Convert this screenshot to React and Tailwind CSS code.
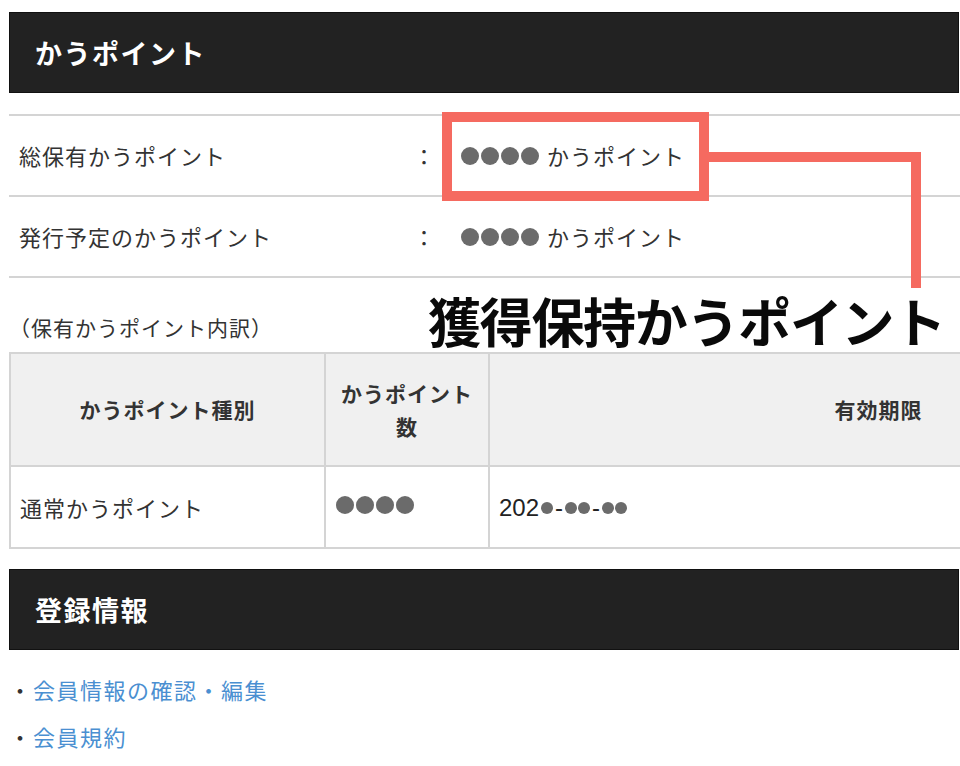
import React from 'react';

const font = { fontFamily: '"Noto Sans CJK JP", "Noto Sans", sans-serif' };

function SectionBar({ title }) {
  return (
    <div className="w-[950px] h-[81px] bg-[#222222] border border-[#111111] flex items-center pl-[25px]">
      <h2 className="text-white text-[27px] font-bold leading-none tracking-[1.5px]">{title}</h2>
    </div>
  );
}

function Dots({ big = true }) {
  const dot = big ? 'w-[18px] h-[18px]' : 'w-[12px] h-[12px]';
  const count = big ? 4 : 2;
  return (
    <span className={`inline-flex items-center ${big ? 'gap-[2px]' : 'gap-[1px]'}`}>
      {Array.from({ length: count }).map((_, i) => (
        <span key={i} className={`${dot} rounded-full bg-[#6b6b6b]`} />
      ))}
    </span>
  );
}

function PointRow({ label }) {
  return (
    <div className="flex items-center h-[81px] border-b-2 border-[#d4d4d4] text-[22px] text-[#333333] tracking-[1px]">
      <div className="w-[404px] pl-[10px]">{label}</div>
      <div className="w-[48px]">：</div>
      <div className="flex items-center gap-[8px]">
        <Dots />
        <span>かうポイント</span>
      </div>
    </div>
  );
}

export default function App() {
  return (
    <div className="relative w-[960px] h-[766px] overflow-hidden bg-white" style={font}>
      <div className="pl-[9px] pt-[12px]">
        <SectionBar title="かうポイント" />

        <div className="w-[951px] mt-[21px] border-t-2 border-[#d4d4d4]">
          <PointRow label="総保有かうポイント" />
          <PointRow label="発行予定のかうポイント" />
        </div>

        <p className="mt-[39px] text-[21px] text-[#333333] leading-none tracking-[1px]">（保有かうポイント内訳）</p>

        <table className="mt-[14px] w-[1260px] border-collapse text-[#333333]">
          <thead>
            <tr className="bg-[#f0f0f0] h-[113px]">
              <th className="w-[315px] border-2 border-[#d4d4d4] text-[21px] font-bold tracking-[1px]">かうポイント種別</th>
              <th className="w-[164px] border-2 border-[#d4d4d4] text-[21px] font-bold leading-[33px] px-2 tracking-[1px]">かうポイント数</th>
              <th className="border-2 border-[#d4d4d4] text-[21px] font-bold tracking-[1px]">有効期限</th>
            </tr>
          </thead>
          <tbody>
            <tr className="h-[82px]">
              <td className="border-2 border-[#d4d4d4] pl-[9px] text-[22px] tracking-[1px]">通常かうポイント</td>
              <td className="border-2 border-[#d4d4d4] pl-[10px]"><Dots /></td>
              <td className="border-2 border-[#d4d4d4] pl-[9px] text-[24px] text-[#222222]">
                <span className="inline-flex items-center gap-[2px]" style={{ fontFamily: '"Liberation Sans", sans-serif' }}>
                  <span>202</span>
                  <span className="w-[12px] h-[12px] rounded-full bg-[#6b6b6b]" />
                  <span>-</span>
                  <Dots big={false} />
                  <span>-</span>
                  <Dots big={false} />
                </span>
              </td>
            </tr>
          </tbody>
        </table>

        <div className="mt-[20px]">
          <SectionBar title="登録情報" />
        </div>

        <ul className="mt-[23px] text-[22px] flex flex-col gap-[14px] tracking-[1.5px]">
          <li className="flex items-center"><span className="text-[#333333] w-[24px]">・</span><a className="text-[#4a8fd1]">会員情報の確認・編集</a></li>
          <li className="flex items-center"><span className="text-[#333333] w-[24px]">・</span><a className="text-[#4a8fd1]">会員規約</a></li>
        </ul>
      </div>

      {/* annotation */}
      <div className="absolute left-[442px] top-[112px] w-[267px] h-[89px] border-[10px] border-[#f56a60]" />
      <div className="absolute left-[709px] top-[152px] w-[212px] h-[10px] bg-[#f56a60]" />
      <div className="absolute left-[911px] top-[152px] w-[10px] h-[136px] bg-[#f56a60]" />
      <div className="absolute left-[428px] top-[294px] text-[53px] font-bold text-[#0a0a0a] leading-none tracking-[-1.3px]">獲得保持かうポイント</div>
    </div>
  );
}
